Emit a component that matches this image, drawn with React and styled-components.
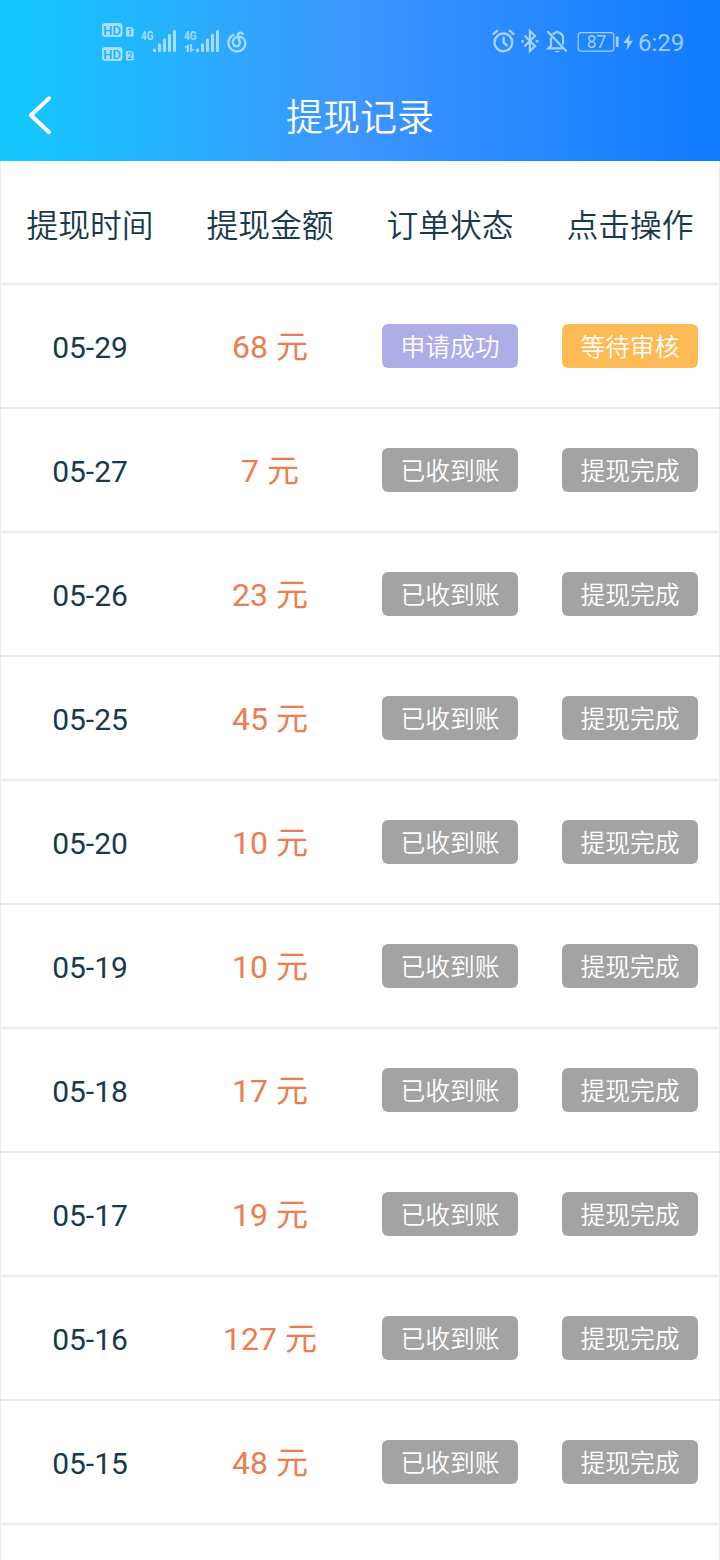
import React from "react";
import styled, { createGlobalStyle } from "styled-components";

const GlobalStyle = createGlobalStyle`
  * {
    box-sizing: border-box;
  }

  body {
    margin: 0;
    background: #fff;
    font-family: Roboto, "Noto Sans CJK SC", sans-serif;
    font-weight: 400;
  }
`;

const Page = styled.div`
  width: 720px;
  height: 1560px;
  overflow: hidden;
  background: #fff;
`;

const Header = styled.header`
  height: 161px;
  background: linear-gradient(90deg, #12c9fe 0%, #3d95fe 50%, #107aff 100%);
`;

const StatusBar = styled.div`
  display: flex;
  justify-content: space-between;
  height: 70px;
  padding: 20px 36px 0 100px;
  color: rgba(224, 246, 255, 0.68);
`;

const StatusGroup = styled.div`
  display: flex;
  align-items: flex-start;

  svg {
    display: block;
    height: 44px;
  }
`;

const Clock = styled.span`
  width: 46px;
  margin-left: 4px;
  font-size: 24px;
  line-height: 46px;
  white-space: nowrap;
`;

const NavBar = styled.div`
  display: grid;
  grid-template-columns: 80px 1fr 80px;
  align-items: center;
  height: 91px;
`;

const BackButton = styled.button`
  display: flex;
  padding: 0 0 0 26px;
  border: 0;
  background: transparent;
  color: #fff;
`;

const Title = styled.h1`
  margin: 0;
  padding-top: 6px;
  text-align: center;
  font-weight: 350;
  font-size: 37px;
  line-height: 85px;
  color: #fff;
`;

const Table = styled.div`
  height: 1399px;
  border-left: 1px solid #ebebeb;
  border-right: 1px solid #ebebeb;
`;

const Row = styled.div`
  display: grid;
  grid-template-columns: repeat(4, 1fr);
  align-items: center;
  height: 124px;
  margin: 0 -1px;
  border-bottom: 2px solid #ebebeb;
`;

const HeadCell = styled.div`
  padding-top: 8px;
  text-align: center;
  font-weight: 350;
  font-size: 31.8px;
  line-height: 46px;
  color: #17394d;
`;

const DateCell = styled.div`
  padding-top: 4px;
  text-align: center;
  font-size: 30px;
  line-height: 44px;
  color: #17394d;
`;

const AmountCell = styled.div`
  padding-top: 2px;
  text-align: center;
  font-size: 32px;
  line-height: 46px;
  color: #ec7d4e;
`;

const Badge = styled.div`
  justify-self: center;
  width: 136px;
  height: 44px;
  padding-top: 2px;
  border-radius: 6px;
  text-align: center;
  font-weight: 350;
  font-size: 24.8px;
  line-height: 43px;
  color: #fff;
  background: ${({ $color }) => $color};
`;

const GREY = "#a3a3a3";
const PURPLE = "#afade8";
const ORANGE = "#ffba55";

const columns = ["提现时间", "提现金额", "订单状态", "点击操作"];

const records = [
  { date: "05-29", amount: 68, pending: true },
  { date: "05-27", amount: 7 },
  { date: "05-26", amount: 23 },
  { date: "05-25", amount: 45 },
  { date: "05-20", amount: 10 },
  { date: "05-19", amount: 10 },
  { date: "05-18", amount: 17 },
  { date: "05-17", amount: 19 },
  { date: "05-16", amount: 127 },
  { date: "05-15", amount: 48 },
];

const HdIcon = () => (
  <svg width='38' viewBox='0 0 38 44' fill='currentColor'>
    {[0, 24].map((y, i) => (
      <g key={y} transform={`translate(0 ${y})`}>
        <rect x='2' y='3' width='20.4' height='14' rx='3.2' />
        <text
          x='12.2'
          y='14.6'
          textAnchor='middle'
          fontSize='13'
          fontWeight='500'
          fill='#27adfb'
        >
          HD
        </text>
        <path d='M27 7h4.6l2.2 2.2V15.400a1 1 0 0 1-1 1H27a1 1 0 0 1-1-1V8a1 1 0 0 1 1-1z' />
        <text
          x='29.9'
          y='15'
          textAnchor='middle'
          fontSize='9'
          fontWeight='700'
          fill='#27adfb'
        >
          {i + 1}
        </text>
      </g>
    ))}
  </svg>
);

const SignalIcon = ({ data }) => (
  <svg width='43' viewBox='0 0 43 44' fill='currentColor'>
    <text x='3' y='20' fontSize='13.5' fontWeight='700' textLength='12.5' lengthAdjust='spacingAndGlyphs'>
      4G
    </text>
    {data && (
      <path d='M7.8 24v8H5.6v-4.6H3.2zM9.2 24h1.9v5h2.6L10 32h-.8z' />
    )}
    <rect x='15' y='28.500' width='3' height='3.5' rx='1' />
    <rect x='20' y='23.5' width='3' height='8.5' rx='1' />
    <rect x='25' y='18.5' width='3' height='13.5' rx='1' />
    <rect x='30' y='14' width='3' height='18' rx='1' />
    <rect x='35' y='10' width='3' height='22' rx='1' />
  </svg>
);

const MusicIcon = () => (
  <svg
    width='24'
    viewBox='0 0 24 44'
    fill='none'
    stroke='currentColor'
    strokeWidth='2.4'
    strokeLinecap='round'
  >
    <path d='M9.400 14.800C6.400 16.200 4.400 19.200 4.400 22.800c0 5 3.800 8.700 8.500 8.700s8.500-3.600 8.500-8.200c0-3.800-2.900-6.500-6.700-6.500-3.500 0-5.900 2.300-5.900 5.300 0 2.400 1.700 4.100 3.800 4.100 2.300 0 3.500-1.800 3.100-3.900l-1.600-6.200c-.5-2.200.6-3.400 2.300-3.400 1 0 1.700.3 2.400.9' />
  </svg>
);

const AlarmIcon = () => (
  <svg
    width='28'
    viewBox='0 0 28 44'
    fill='none'
    stroke='currentColor'
    strokeWidth='2.4'
    strokeLinecap='round'
  >
    <circle cx='12.4' cy='22.4' r='8.9' />
    <path d='M12.6 17.6v5l3 2.8M2.4 13.8l3.6-3M22.4 13.8l-3.6-3' />
  </svg>
);

const BluetoothIcon = () => (
  <svg width='26' viewBox='0 0 26 44' fill='none' stroke='currentColor' strokeWidth='2.2'>
    <path d='M5.5 15.5 16 26.3l-5.1 4.7V11l5.1 4.7L5.5 26.5' />
    <path d='M2.2 21.2h2.6M16.8 21.2h2.6' strokeWidth='2.4' />
  </svg>
);

const BellOffIcon = () => (
  <svg
    width='31'
    viewBox='0 0 31 44'
    fill='none'
    stroke='currentColor'
    strokeWidth='2.2'
    strokeLinecap='round'
  >
    <path d='M2.8 11.8 21 30.8M8.4 13.8c.8-.8 1.7-1.2 2.5-1.4.2-1.2 2.2-1.2 2.4 0 2.9.7 4.8 3 4.8 6.2v5.2M6 18.4v7.2l-2.6 2.8h13.4' />
    <path d='M9.4 31c.6 1.8 4.8 1.8 5.4 0z' fill='currentColor' stroke='none' />
  </svg>
);

const BatteryIcon = () => (
  <svg width='44' viewBox='0 0 44 44' fill='currentColor'>
    <rect
      x='2.2'
      y='12.6'
      width='35.6'
      height='18.6'
      rx='3'
      fill='none'
      stroke='currentColor'
      strokeWidth='1.2'
    />
    <text x='20.6' y='28.2' textAnchor='middle' fontSize='18' textLength='19.6' lengthAdjust='spacingAndGlyphs'>
      87
    </text>
    <rect x='39.8' y='16.5' width='2.8' height='10.5' rx='1' />
  </svg>
);

const BoltIcon = () => (
  <svg width='14' viewBox='0 0 14 44' fill='currentColor'>
    <path d='M10.2 13.6 3.4 23h4.2L6.4 30.6 13 20.8H8.9z' />
  </svg>
);

const BackIcon = () => (
  <svg
    width='28'
    height='40'
    viewBox='0 0 28 40'
    fill='none'
    stroke='currentColor'
    strokeWidth='4'
    strokeLinecap='round'
    strokeLinejoin='round'
  >
    <path d='M23 2.4 4.9 19.2 23 36.2' />
  </svg>
);

const Record = ({ date, amount, pending }) => (
  <Row>
    <DateCell>{date}</DateCell>
    <AmountCell>{amount} 元</AmountCell>
    <Badge $color={pending ? PURPLE : GREY}>{pending ? "申请成功" : "已收到账"}</Badge>
    <Badge $color={pending ? ORANGE : GREY}>{pending ? "等待审核" : "提现完成"}</Badge>
  </Row>
);

const App = () => {
  return (
    <Page lang='zh-CN'>
      <GlobalStyle />
      <Header>
        <StatusBar>
          <StatusGroup>
            <HdIcon />
            <SignalIcon />
            <SignalIcon data />
            <MusicIcon />
          </StatusGroup>
          <StatusGroup>
            <AlarmIcon />
            <BluetoothIcon />
            <BellOffIcon />
            <BatteryIcon />
            <BoltIcon />
            <Clock>6:29</Clock>
          </StatusGroup>
        </StatusBar>
        <NavBar>
          <BackButton aria-label='返回'>
            <BackIcon />
          </BackButton>
          <Title>提现记录</Title>
        </NavBar>
      </Header>
      <Table>
        <Row>
          {columns.map((column) => (
            <HeadCell key={column}>{column}</HeadCell>
          ))}
        </Row>
        {records.map((record) => (
          <Record key={record.date} {...record} />
        ))}
      </Table>
    </Page>
  );
};

export default App;
